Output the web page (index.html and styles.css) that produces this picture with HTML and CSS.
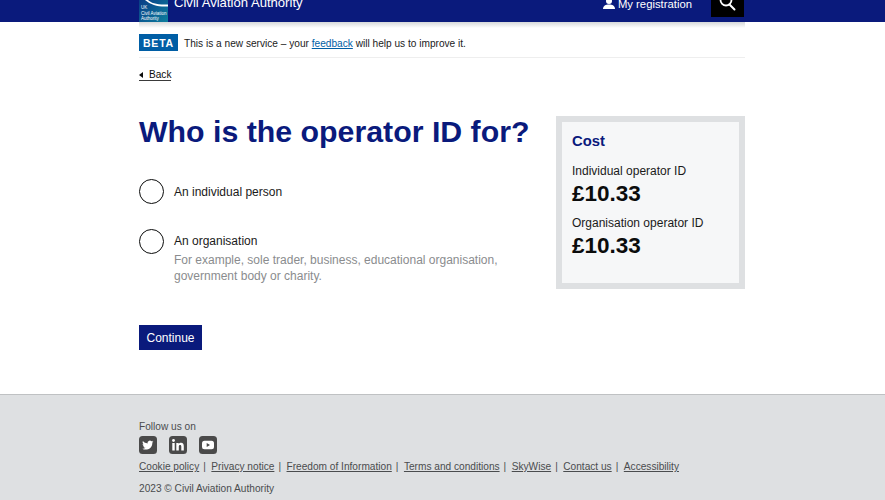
FILE: index.html
```html
<!DOCTYPE html>
<html lang="en">
<head>
<meta charset="utf-8">
<title>Who is the operator ID for?</title>
<link rel="stylesheet" href="styles.css">
</head>
<body>
<header class="site-header">
  <div class="wrap header-inner">
    <div class="brand">
      <div class="logo">
        <svg class="logo-swoosh" viewBox="0 0 29 7" width="29" height="7" aria-hidden="true"><path d="M9 0 C12 3 18 5 29 4.500 L29 6.500 C19 7 12 5 6 0 Z" fill="#ffffff"/></svg>
        <span class="logo-text">UK<br>Civil Aviation<br>Authority</span>
      </div>
      <span class="brand-name">Civil Aviation Authority</span>
    </div>
    <div class="header-actions">
      <a class="registration">
        <svg viewBox="0 0 12 11" width="12" height="11" aria-hidden="true"><circle cx="6" cy="3" r="3" fill="#fff"/><path d="M0 11 C0 7.600 2.600 6.400 6 6.400 C9.400 6.400 12 7.600 12 11 Z" fill="#fff"/></svg>
        My registration
      </a>
      <div class="search">
        <svg viewBox="0 0 18 12" width="18" height="12" aria-hidden="true"><circle cx="7" cy="0" r="5.500" fill="none" stroke="#fff" stroke-width="1.800"/><path d="M10.500 4.500 L15.500 9.500" stroke="#fff" stroke-width="2" stroke-linecap="round"/></svg>
      </div>
    </div>
  </div>
</header>
<div class="wrap header-shadow"></div>
<main class="wrap">
  <div class="beta">
    <span class="beta-tag">BETA</span>
    <span class="beta-text">This is a new service – your <a class="link" href="#">feedback</a> will help us to improve it.</span>
  </div>
  <a class="back" href="#"><span class="back-arrow"></span>Back</a>
  <div class="columns">
    <div class="question">
      <h1>Who is the operator ID for?</h1>
      <div class="option first">
        <span class="radio"></span>
        <span class="option-label">An individual person</span>
      </div>
      <div class="option second">
        <span class="radio"></span>
        <div>
          <span class="option-label">An organisation</span>
          <p class="hint">For example, sole trader, business, educational organisation, government body or charity.</p>
        </div>
      </div>
      <button class="continue" type="button">Continue</button>
    </div>
    <aside class="cost">
      <h2>Cost</h2>
      <p class="cost-label">Individual operator ID</p>
      <p class="cost-price">£10.33</p>
      <p class="cost-label second-label">Organisation operator ID</p>
      <p class="cost-price">£10.33</p>
    </aside>
  </div>
</main>
<footer class="site-footer">
  <div class="wrap">
    <p class="follow">Follow us on</p>
    <div class="social">
      <span class="social-icon"><svg viewBox="0 0 18 18" width="18" height="18" aria-hidden="true"><g transform="translate(1.400 1.100) scale(.85)"><path d="M15 5.300c-.5.200-1 .4-1.500.4.500-.3 1-.8 1.200-1.400-.5.300-1.100.5-1.700.7a2.700 2.700 0 0 0-4.600 2.400C6.200 7.300 4.300 6.300 3 4.700c-.7 1.200-.4 2.800.8 3.600-.4 0-.8-.1-1.200-.3 0 1.300.9 2.400 2.100 2.700-.4.100-.8.100-1.200 0 .3 1.100 1.300 1.800 2.500 1.900-1 .8-2.400 1.200-3.800 1 3.900 2.500 11.900 1.100 11.900-7.300.5-.4.900-.9 1.200-1.400z" fill="#fff"/></g></svg></span>
      <span class="social-icon"><svg viewBox="0 0 18 18" width="18" height="18" aria-hidden="true"><rect x="3.300" y="7" width="2.400" height="7.500" fill="#fff"/><circle cx="4.500" cy="4.500" r="1.400" fill="#fff"/><path d="M7.300 7h2.400v1.100c.5-.8 1.300-1.300 2.400-1.300 2 0 2.700 1.200 2.700 3.400v4.300h-2.500v-3.900c0-1.100-.3-1.700-1.200-1.700-1 0-1.300.7-1.300 1.700v3.900H7.300z" fill="#fff"/></svg></span>
      <span class="social-icon"><svg viewBox="0 0 18 18" width="18" height="18" aria-hidden="true"><rect x="3" y="4.700" width="12" height="8.600" rx="2.500" fill="#fff"/><path d="M7.700 7v4L11 9z" fill="#4a4a4a"/></svg></span>
    </div>
    <nav class="footer-links">
      <a href="#">Cookie policy</a><span class="sep">|</span>
      <a href="#">Privacy notice</a><span class="sep">|</span>
      <a href="#">Freedom of Information</a><span class="sep">|</span>
      <a href="#">Terms and conditions</a><span class="sep">|</span>
      <a href="#">SkyWise</a><span class="sep">|</span>
      <a href="#">Contact us</a><span class="sep">|</span>
      <a href="#">Accessibility</a>
    </nav>
    <p class="copyright">2023 © Civil Aviation Authority</p>
  </div>
</footer>
</body>
</html>
```
FILE: styles.css
```css
* { box-sizing: border-box; }
html, body { margin: 0; padding: 0; }
body {
  font-family: "Liberation Sans", Arial, sans-serif;
  color: #0b0c0c;
  background: #fff;
  height: 500px;
  overflow: hidden;
  display: flex;
  flex-direction: column;
}
.wrap { width: 606px; margin-left: 139px; }
p, h1, h2 { margin: 0; }

.site-header { background: #0a1a7c; height: 22px; overflow: hidden; flex: none; }
.header-inner { display: flex; justify-content: space-between; height: 22px; }
.brand { display: flex; gap: 6px; align-items: flex-end; height: 22px; }
.logo {
  width: 29px;
  height: 22px;
  background: linear-gradient(135deg, #0a3d86, #0d7f9e);
  overflow: hidden;
  color: #fff;
  font-size: 4.500px;
  line-height: 5.500px;
}
.logo-swoosh { display: block; }
.logo-text { display: block; margin-top: -2px; padding-left: 2px; white-space: nowrap; }
.brand-name { color: #fff; font-size: 13.100px; line-height: 13px; align-self: flex-start; margin-top: -4px; }
.header-actions { display: flex; align-items: flex-start; gap: 19px; }
.registration { color: #fff; font-size: 11.300px; line-height: 13px; display: flex; gap: 3px; align-items: flex-start; margin-top: -2px; }
.search {
  background: #000;
  width: 33px;
  height: 17px;
  display: flex;
  justify-content: center;
  align-items: flex-start;
  margin-right: 1px;
}

.header-shadow { height: 6px; background: linear-gradient(#d6d8da, #fff); flex: none; }

.beta {
  display: flex;
  align-items: center;
  gap: 6px;
  height: 30px;
  border-bottom: 1.500px solid #eeeeee;
  color: #1a1a1a;
}
.beta-text { font-size: 10.150px; padding-top: 1px; }
.beta-tag {
  background: #005ea5;
  color: #fff;
  font-weight: 700;
  font-size: 10.500px;
  letter-spacing: .8px;
  width: 39px;
  height: 17px;
  display: flex;
  align-items: center;
  justify-content: center;
}
.link { color: #005ea5; }
.back {
  display: inline-flex;
  align-items: center;
  gap: 6px;
  margin-top: 10px;
  padding-top: 2px;
  color: #0b0c0c;
  font-size: 10.100px;
  line-height: 10px;
  text-decoration: none;
  border-bottom: 1px solid #3a3a3a;
}
.back-arrow {
  border-style: solid;
  border-width: 3.500px 4px 3.500px 0;
  border-color: transparent #0b0c0c transparent transparent;
}
.columns { display: flex; justify-content: space-between; margin-top: 33px; }
.question { width: 400px; }
h1 { color: #0a1a7c; font-size: 30.300px; line-height: 34px; font-weight: 700; white-space: nowrap; }
.option { display: flex; align-items: flex-start; gap: 10px; }
.option.first { margin-top: 30px; }
.option.second { margin-top: 24px; }
.radio {
  width: 25px;
  height: 25px;
  border: 1.500px solid #0b0c0c;
  border-radius: 50%;
  background: #fff;
  flex: none;
}
.option-label { display: block; font-size: 12px; line-height: 25px; color: #1a1a1a; }
.first .option-label { line-height: 26px; }
.hint { color: #8a8c8e; font-size: 12px; line-height: 16px; width: 340px; margin-top: -2px; }
.continue {
  display: block;
  margin-top: 41px;
  width: 63px;
  height: 25px;
  border: 0;
  padding: 0;
  background: #0a1a7c;
  color: #fff;
  font: 12px "Liberation Sans", Arial, sans-serif;
}
.cost {
  width: 189px;
  height: 173px;
  margin-top: 1px;
  background: #f6f7f8;
  border: 6px solid #dee0e2;
  padding: 10px;
}
.cost h2 { color: #0a1a7c; font-size: 14.800px; line-height: 18px; font-weight: 700; }
.cost-label { font-size: 12px; line-height: 16px; margin-top: 13px; color: #1a1a1a; }
.second-label { margin-top: 7px; }
.cost-price { font-size: 22.500px; line-height: 28px; font-weight: 700; color: #0b0c0c; margin-top: 1px; }

.site-footer {
  margin-top: auto;
  height: 106px;
  flex: none;
  background: #dee0e2;
  border-top: 1px solid #bfc1c3;
  padding-top: 26px;
  color: #4a4c4e;
  font-size: 10.150px;
}
.follow { line-height: 12px; }
.social { display: flex; gap: 12px; margin-top: 3px; }
.social-icon { width: 18px; height: 18px; background: #4a4a4a; border-radius: 3.500px; display: block; }
.social-icon svg { display: block; }
.footer-links { display: flex; margin-top: 6px; line-height: 13px; white-space: nowrap; }
.footer-links a { color: #4a4c4e; }
.sep { margin: 0 5.500px 0 4px; }
.copyright { margin-top: 9px; line-height: 13px; }
```
